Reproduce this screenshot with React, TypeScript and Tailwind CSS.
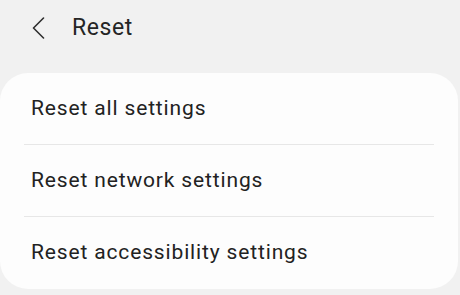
import React from 'react';

const items = ['Reset all settings', 'Reset network settings', 'Reset accessibility settings'];

const App = () => {
  return (
    <div
      className="w-[460px] h-[295px] bg-[#f1f1f1] overflow-hidden"
      style={{ fontFamily: 'Roboto, "Liberation Sans", sans-serif' }}
    >
      <header className="h-[73px] flex items-start pt-[17px] pl-[32px]">
        <svg width="13" height="22" viewBox="0 0 13 22">
          <path d="M11.5 1 L1.5 11 L11.5 21" fill="none" stroke="#2f2f2f" strokeWidth="1.6" strokeLinecap="round" strokeLinejoin="round" />
        </svg>
        <h1 className="ml-[27px] mt-[-1px] text-[23px] leading-[24px] tracking-[0.6px] text-[#252525]">Reset</h1>
      </header>
      <div className="w-[458px] h-[216px] bg-[#fdfdfd] rounded-[28px] flex flex-col">
        {items.map((label, i) => (
          <div key={label} className="flex flex-col flex-1">
            <div className="flex-1 flex items-center pl-[31px] text-[21px] tracking-[0.85px] text-[#222222]">{label}</div>
            {i < items.length - 1 && <div className="mx-[24px] h-px bg-[#e7e7e7]" />}
          </div>
        ))}
      </div>
    </div>
  );
};

export default App;
